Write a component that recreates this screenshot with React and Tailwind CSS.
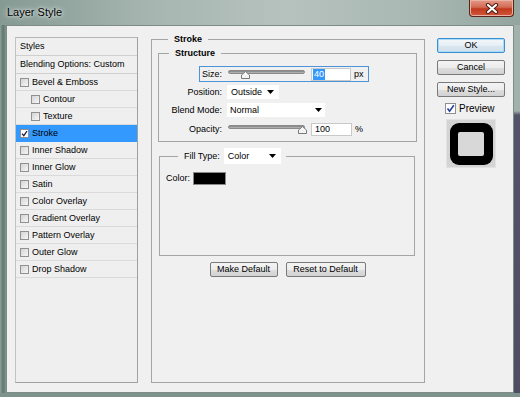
import React from "react";

const font = "font-['Liberation_Sans',Arial,sans-serif]";

function Check({ checked, className = "" }) {
  return (
    <span
      className={`flex h-[9px] w-[9px] shrink-0 items-center justify-center border border-[#909090] ${
        checked ? "bg-white" : "bg-[linear-gradient(135deg,#d4d4d4,#f6f6f6)]"
      } ${className}`}
    >
      {checked && (
        <svg width="7" height="7" viewBox="0 0 7 7">
          <path d="M1 3.6 L2.8 5.6 L6 1" fill="none" stroke="#1b1b3a" strokeWidth="1.3" />
        </svg>
      )}
    </span>
  );
}

function Arrow() {
  return (
    <svg width="7" height="4" viewBox="0 0 7 4" className="shrink-0">
      <polygon points="0,0 7,0 3.5,4" fill="#000" />
    </svg>
  );
}

function Slider({ pos }) {
  return (
    <div className="relative h-[12px] w-[77px]">
      <div className="absolute left-0 right-0 top-[2px] h-[4px] rounded-full border border-[#8a8a8a] bg-[linear-gradient(#7e7e7e,#bdbdbd)]" />
      <svg
        width="9"
        height="8"
        viewBox="0 0 9 8"
        className="absolute top-[3px]"
        style={{ left: pos }}
      >
        <polygon points="4.5,0.5 8.5,4 8.5,7.5 0.5,7.5 0.5,4" fill="#f4f4f4" stroke="#7a7a7a" />
      </svg>
    </div>
  );
}

function Btn({ children, w, primary }) {
  return (
    <button
      className={`${w} flex h-[15px] items-center justify-center rounded-[2px] border text-[9px] leading-none text-black ${
        primary
          ? "border-[#3c8fd0] bg-[linear-gradient(#f4f8fb,#e6eef5_50%,#dbe6ef_51%,#d2e0ec)] shadow-[inset_0_0_0_1px_#a8dcf6]"
          : "border-[#7a7a7a] bg-[linear-gradient(#f4f4f4,#ececec_50%,#dedede_51%,#d2d2d2)]"
      }`}
    >
      {children}
    </button>
  );
}

const rows = [
  { name: "Bevel & Emboss" },
  { name: "Contour", sub: true },
  { name: "Texture", sub: true },
  { name: "Stroke", checked: true, active: true },
  { name: "Inner Shadow" },
  { name: "Inner Glow" },
  { name: "Satin" },
  { name: "Color Overlay" },
  { name: "Gradient Overlay" },
  { name: "Pattern Overlay" },
  { name: "Outer Glow" },
  { name: "Drop Shadow" },
];

export default function App() {
  return (
    <div
      className={`flex h-[397px] w-[520px] flex-col overflow-hidden bg-[linear-gradient(90deg,#869a94_0%,#a7b6b1_30%,#b6c2be_55%,#a9b8b3_80%,#93a59f_100%)] ${font}`}
    >
      {/* title bar */}
      <div className="flex h-[25px] shrink-0 items-start justify-between">
        <span className="ml-[7px] mt-[6px] text-[11px] leading-[13px] text-black [text-shadow:0_0_6px_#e8eeeb,0_0_3px_#e8eeeb]">
          Layer Style
        </span>
        <button className="mr-[6px] flex h-[17px] w-[45px] items-center justify-center rounded-b-[4px] border border-t-0 border-[#5a2418] bg-[linear-gradient(#e39a88,#d46a53_45%,#c1391f_55%,#d0583a)] shadow-[inset_0_0_0_1px_#eab2a4]">
          <svg width="14" height="11" viewBox="0 0 14 11">
            <path d="M3 2 L11 9 M11 2 L3 9" stroke="#4a1c14" strokeWidth="4.2" strokeLinecap="round" />
            <path d="M3 2 L11 9 M11 2 L3 9" stroke="#ffffff" strokeWidth="2.2" strokeLinecap="round" />
          </svg>
        </button>
      </div>

      <div className="flex h-[368px] shrink-0">
        <div className="w-[6px] bg-[linear-gradient(90deg,#8fa29c,#5f776f_50%,#7f948d)]" />

        {/* client area */}
        <div className="flex w-[508px] items-start border border-[#7d8c88] bg-[#f0f0f0] pl-[8px] pt-[11px] text-[9px] leading-[11px] text-black">
          {/* styles list */}
          <div className="h-[346px] w-[123px] shrink-0 border border-[#a0a0a0] border-l-[#c2c2c2] border-t-[#b5b5b5] bg-[#efefef]">
            <div className="flex h-[18px] items-center border-b border-[#cfcfcf] pl-[4px]">Styles</div>
            <div className="flex h-[18px] items-center border-b border-[#cfcfcf] pl-[4px]">
              Blending Options: Custom
            </div>
            {rows.map((r) => (
              <div
                key={r.name}
                className={`flex h-[17px] items-center border-b ${
                  r.active ? "border-[#3399ff] bg-[#3399ff]" : "border-[#dadada]"
                } ${r.sub ? "pl-[15px]" : "pl-[4px]"}`}
              >
                <Check checked={r.checked} />
                <span className="ml-[3px]">{r.name}</span>
              </div>
            ))}
          </div>

          {/* stroke group */}
          <fieldset className="-mt-[3px] ml-[13px] flex h-[349px] w-[274px] shrink-0 flex-col border border-[#a5a5a5] pl-[6px] pr-[7px]">
            <legend className="ml-[10px] px-[6px] font-bold">Stroke</legend>

            <fieldset className="mt-[3px] flex flex-col border border-[#a5a5a5] pb-[5px]">
              <legend className="ml-[10px] px-[6px] font-bold">Structure</legend>

              <div className="ml-[40px] mt-[7px] flex h-[16px] w-[170px] items-center border border-[#4d93dc]">
                <span className="w-[22px] text-right">Size:</span>
                <div className="ml-[6px]">
                  <Slider pos="13px" />
                </div>
                <div className="ml-[6px] flex h-[13px] w-[40px] items-center border border-[#c9c9c9] bg-white pl-[1px]">
                  <span className="bg-[#3399ff] px-[1px] text-white">40</span>
                </div>
                <span className="ml-[3px]">px</span>
              </div>

              <div className="mt-[3px] flex h-[14px] items-center">
                <span className="w-[63px] text-right">Position:</span>
                <div className="ml-[5px] flex h-[14px] w-[52px] items-center justify-between bg-white pl-[4px] pr-[5px]">
                  <span>Outside</span>
                  <Arrow />
                </div>
              </div>

              <div className="mt-[4px] flex h-[14px] items-center">
                <span className="w-[63px] text-right">Blend Mode:</span>
                <div className="ml-[5px] flex h-[14px] w-[98px] items-center justify-between bg-white pl-[3px] pr-[3px]">
                  <span>Normal</span>
                  <Arrow />
                </div>
              </div>

              <div className="mt-[5px] flex h-[14px] items-center">
                <span className="w-[63px] text-right">Opacity:</span>
                <div className="ml-[6px]">
                  <Slider pos="70px" />
                </div>
                <div className="ml-[6px] flex h-[13px] w-[41px] items-center border border-[#c9c9c9] bg-white pl-[3px]">
                  100
                </div>
                <span className="ml-[3px]">%</span>
              </div>
            </fieldset>

            <fieldset className="ml-[1px] mr-[2px] mt-[6px] h-[108px] border border-[#a5a5a5] pl-[6px]">
              <legend className="ml-[12px] flex items-center pl-[6px] pr-[5px]">
                <span>Fill Type:</span>
                <div className="ml-[4px] flex h-[16px] w-[57px] items-center justify-between bg-white pl-[4px] pr-[5px]">
                  <span>Color</span>
                  <Arrow />
                </div>
              </legend>
              <div className="mt-[8px] flex items-center">
                <span>Color:</span>
                <div className="ml-[3px] h-[13px] w-[33px] border border-[#8a8a8a] bg-black" />
              </div>
            </fieldset>

            <div className="mt-[6px] flex justify-center gap-[8px]">
              <Btn w="w-[68px]">Make Default</Btn>
              <Btn w="w-[80px]">Reset to Default</Btn>
            </div>
          </fieldset>

          {/* buttons column */}
          <div className="ml-[12px] mt-[1px] flex w-[68px] shrink-0 flex-col">
            <Btn w="w-[68px]" primary>
              OK
            </Btn>
            <div className="mt-[7px]">
              <Btn w="w-[68px]">Cancel</Btn>
            </div>
            <div className="mt-[7px]">
              <Btn w="w-[68px]">New Style...</Btn>
            </div>
            <div className="ml-[8px] mt-[6px] flex items-center">
              <span className="flex h-[11px] w-[11px] items-center justify-center border border-[#8f8f8f] bg-white">
                <svg width="9" height="9" viewBox="0 0 9 9">
                  <path d="M1.5 4.5 L3.6 7.2 L7.8 1.3" fill="none" stroke="#23409a" strokeWidth="1.6" />
                </svg>
              </span>
              <span className="ml-[3px] text-[10px]">Preview</span>
            </div>
            <div className="ml-[9px] mt-[5px] flex h-[49px] w-[50px] items-center justify-center border border-[#e2e2e2] bg-[#d4d4d4]">
              <div className="flex h-[42px] w-[43px] items-center justify-center rounded-[9px] bg-black">
                <div className="h-[24px] w-[26px] rounded-[2px] bg-[#d8d8d8]" />
              </div>
            </div>
          </div>
        </div>

        <div className="w-[6px] bg-[linear-gradient(#a3b1ad_0,#a3b1ad_86px,#55536a_90px,#4f4d62)]" />
      </div>
      <div className="h-[4px] shrink-0 bg-[#7f938d]" />
    </div>
  );
}
